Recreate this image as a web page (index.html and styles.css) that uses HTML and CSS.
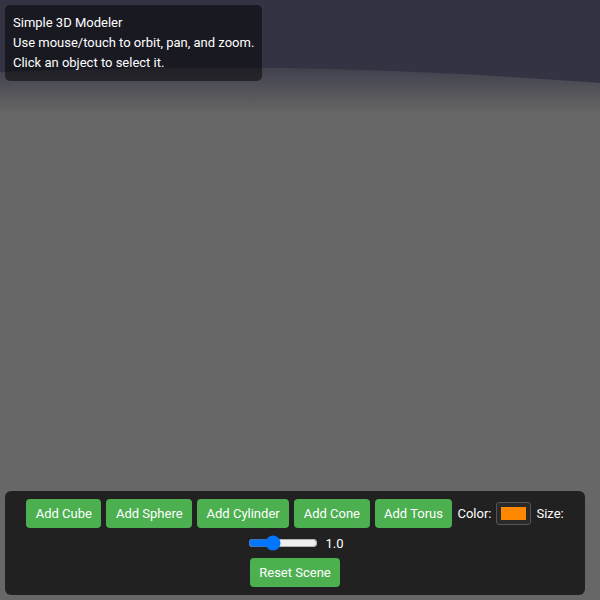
FILE: index.html
```html
<!DOCTYPE html>
<html lang="en">
<head>
    <meta charset="UTF-8">
    <meta name="viewport" content="width=device-width, initial-scale=1.0">
    <title>Simple 3D Modeler</title>
    <link rel="stylesheet" href="styles.css">
</head>
<body>
    <div class="viewport">
        <svg class="scene" viewBox="0 0 600 600" preserveAspectRatio="none">
            <defs>
                <linearGradient id="fog" gradientUnits="userSpaceOnUse" x1="0" y1="66" x2="0" y2="114">
                    <stop offset="0" stop-color="#3f3f4c"/>
                    <stop offset="1" stop-color="#676767"/>
                </linearGradient>
            </defs>
            <rect width="600" height="600" fill="#333344"/>
            <path d="M0 72 C 180 65, 360 65, 600 83 L600 600 L0 600 Z" fill="url(#fog)"/>
        </svg>

        <div class="info">
            Simple 3D Modeler<br>
            Use mouse/touch to orbit, pan, and zoom.<br>
            Click an object to select it.
        </div>

        <div class="controls">
            <div class="control-row">
                <button id="add-cube">Add Cube</button>
                <button id="add-sphere">Add Sphere</button>
                <button id="add-cylinder">Add Cylinder</button>
                <button id="add-cone">Add Cone</button>
                <button id="add-torus">Add Torus</button>
                <label for="color">Color:</label>
                <input type="color" id="color" value="#ff8800">
                <label for="size">Size:</label>
                <input type="range" id="size" min="0.1" max="3" step="0.1" value="1">
                <span id="size-value">1.0</span>
            </div>
            <button id="reset">Reset Scene</button>
        </div>
    </div>
</body>
</html>
```

FILE: styles.css
```css
body {
    margin: 0;
    overflow: hidden;
    font-family: Roboto, "Liberation Sans", Arial, sans-serif;
    font-size: 13px;
    color: #fff;
    background-color: #676767;
}

.viewport {
    position: relative;
    width: 100vw;
    height: 100vh;
}

.scene {
    position: absolute;
    top: 0;
    left: 0;
    width: 100%;
    height: 100%;
    display: block;
}

.info {
    position: absolute;
    top: 5px;
    left: 5px;
    padding: 8px;
    line-height: 20px;
    background-color: rgba(0, 0, 0, 0.5);
    border-radius: 5px;
}

.controls {
    position: absolute;
    left: 5px;
    right: 15px;
    bottom: 5px;
    padding: 8px;
    display: flex;
    flex-direction: column;
    align-items: center;
    gap: 5px;
    background-color: rgba(0, 0, 0, 0.68);
    border-radius: 6px;
}

.control-row {
    display: flex;
    flex-wrap: wrap;
    justify-content: center;
    align-items: center;
    gap: 5px;
}

button {
    padding: 6px 9.5px;
    font-family: inherit;
    font-size: 13px;
    line-height: 17px;
    color: #fff;
    background-color: #4caf50;
    border: none;
    border-radius: 4px;
    cursor: pointer;
}

input[type="color"] {
    -webkit-appearance: none;
    appearance: none;
    width: 35px;
    height: 23px;
    padding: 0;
    margin: 0;
    background-color: #2a2a2a;
    border: 1px solid #555;
    border-radius: 3px;
}

input[type="color"]::-webkit-color-swatch-wrapper {
    padding: 4px 4px;
}

input[type="color"]::-webkit-color-swatch {
    border: none;
    border-radius: 0;
}

input[type="range"] {
    width: 70px;
}
```
